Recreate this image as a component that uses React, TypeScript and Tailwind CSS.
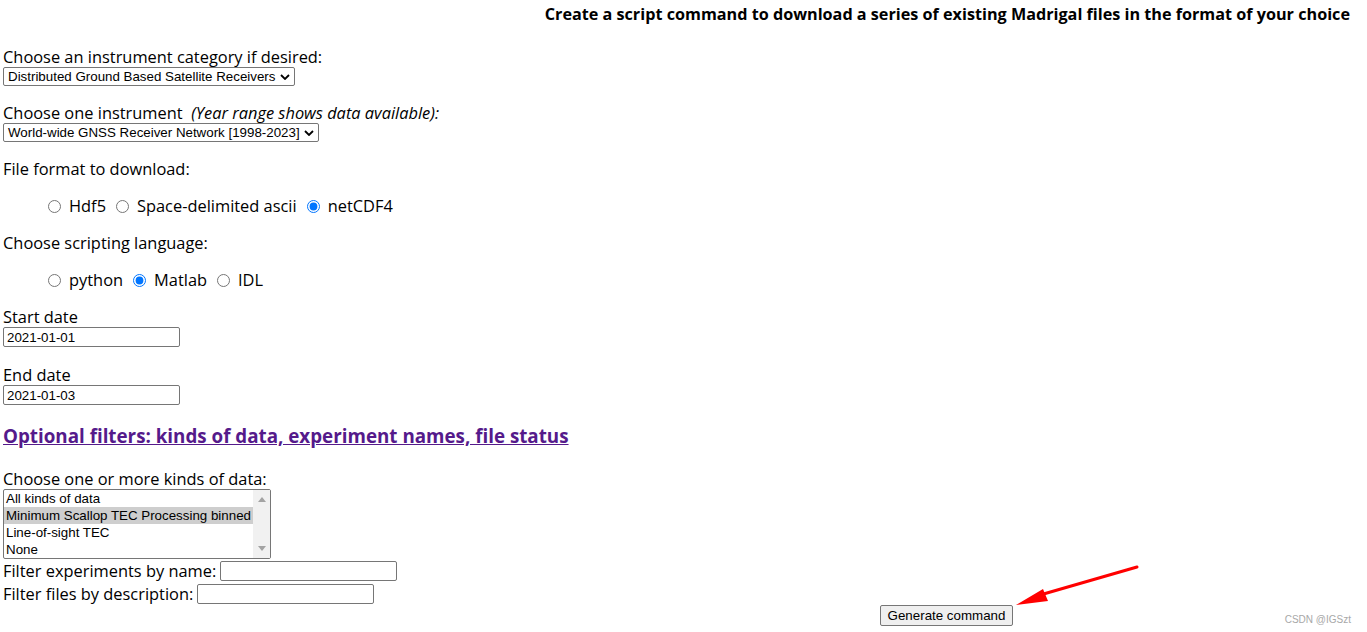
const ctl = "font-['Liberation_Sans',Arial,sans-serif] text-[13.33px]";

function Chevron() {
  return (
    <svg width="10" height="6" viewBox="0 0 10 6" className="shrink-0">
      <path d="M1 1 L5 5 L9 1" fill="none" stroke="#000" strokeWidth="1.8" />
    </svg>
  );
}

function Dropdown({ text, width }: { text: string; width: string }) {
  return (
    <div
      className={`${ctl} ${width} h-[19px] flex items-center justify-between pl-[4px] pr-[4px] border border-[#767676] rounded-[2px] bg-white text-black`}
    >
      <span className="whitespace-nowrap leading-none">{text}</span>
      <Chevron />
    </div>
  );
}

function TextBox({ value = "", width = "w-[177px]" }: { value?: string; width?: string }) {
  return (
    <input
      type="text"
      defaultValue={value}
      className={`${ctl} ${width} block h-[20px] px-[3px] border border-[#767676] rounded-[2px] bg-white text-black outline-none`}
    />
  );
}

function Radio({ label, checked, name }: { label: string; checked?: boolean; name: string }) {
  return (
    <label className="flex items-center mr-[10px]">
      <input type="radio" name={name} defaultChecked={checked} className="m-0 w-[13px] h-[13px]" />
      <span className="ml-[8px]">{label}</span>
    </label>
  );
}

function Listbox() {
  const items = [
    "All kinds of data",
    "Minimum Scallop TEC Processing binned",
    "Line-of-sight TEC",
    "None",
  ];
  return (
    <div className={`${ctl} w-[268px] h-[70px] border border-[#767676] rounded-[2px] flex bg-white`}>
      <div className="flex-1 flex flex-col">
        {items.map((t, i) => (
          <div
            key={t}
            className={`h-[17px] leading-[17px] pl-[2px] whitespace-nowrap ${i === 1 ? "bg-[#cecece]" : ""}`}
          >
            {t}
          </div>
        ))}
      </div>
      <div className="w-[17px] bg-[#f1f1f1] flex flex-col justify-between items-center py-[7px]">
        <svg width="8" height="5" viewBox="0 0 8 5">
          <path d="M0 5 L4 0 L8 5 Z" fill="#a3a3a3" />
        </svg>
        <svg width="8" height="5" viewBox="0 0 8 5">
          <path d="M0 0 L4 5 L8 0 Z" fill="#a3a3a3" />
        </svg>
      </div>
    </div>
  );
}

export default function App() {
  return (
    <div className="relative w-[1367px] h-[632px] bg-white text-black font-['Open_Sans',sans-serif] text-[16.4px] overflow-hidden">
      <div className="h-[28px] flex items-center justify-end pr-[17px] font-bold text-[16.2px]">
        Create a script command to download a series of existing Madrigal files in the format of your choice
      </div>

      <div className="pl-[3px]">
        <div className="mt-[19px] leading-[20px]">Choose an instrument category if desired:</div>
        <Dropdown text="Distributed Ground Based Satellite Receivers" width="w-[292px]" />

        <div className="mt-[17px] leading-[20px]">
          Choose one instrument&nbsp; <i>(Year range shows data available):</i>
        </div>
        <Dropdown text="World-wide GNSS Receiver Network [1998-2023]" width="w-[316px]" />

        <div className="mt-[17px] leading-[20px]">File format to download:</div>
        <div className="mt-[17px] h-[20px] flex items-center pl-[45px]">
          <Radio name="fmt" label="Hdf5" />
          <Radio name="fmt" label="Space-delimited ascii" />
          <Radio name="fmt" label="netCDF4" checked />
        </div>

        <div className="mt-[17px] leading-[20px]">Choose scripting language:</div>
        <div className="mt-[17px] h-[20px] flex items-center pl-[45px]">
          <Radio name="lang" label="python" />
          <Radio name="lang" label="Matlab" checked />
          <Radio name="lang" label="IDL" />
        </div>

        <div className="mt-[17px] leading-[20px]">Start date</div>
        <TextBox value="2021-01-01" />

        <div className="mt-[18px] leading-[20px]">End date</div>
        <TextBox value="2021-01-03" />

        <div className="mt-[19px] leading-[24px]">
          <a href="#" className="font-bold text-[18.8px] text-[#551A8B] underline">
            Optional filters: kinds of data, experiment names, file status
          </a>
        </div>

        <div className="mt-[20px] leading-[20px]">Choose one or more kinds of data:</div>
        <Listbox />

        <div className="mt-[2px] h-[20px] flex items-center gap-[4px]">
          <span>Filter experiments by name:</span>
          <TextBox />
        </div>
        <div className="mt-[3px] h-[20px] flex items-center gap-[4px]">
          <span>Filter files by description:</span>
          <TextBox />
        </div>

        <div className="mt-[1px] pl-[877px]">
          <button
            className={`${ctl} block w-[133px] h-[21px] border border-[#767676] rounded-[2px] bg-[#efefef] text-black`}
          >
            Generate command
          </button>
        </div>
      </div>

      <svg className="absolute left-[1010px] top-[562px]" width="132" height="48" viewBox="0 0 132 48">
        <line x1="30" y1="33" x2="127" y2="5" stroke="#ff0000" strokeWidth="3" strokeLinecap="round" />
        <polygon points="6,43 33,27 38,39" fill="#ff0000" />
      </svg>

      <div className="absolute right-[16px] top-[612px] font-['Liberation_Sans',Arial,sans-serif] text-[10px] text-[#a8a8a8]">
        CSDN @IGSzt
      </div>
    </div>
  );
}
